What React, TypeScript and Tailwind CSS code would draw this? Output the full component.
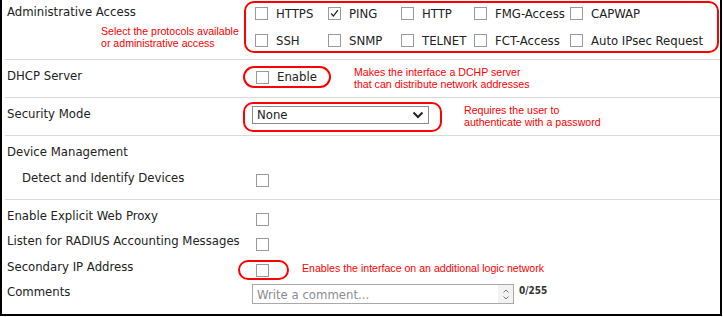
import React from 'react';

const NOTE = "font-['Liberation_Sans',Arial,sans-serif] text-[10.6px] leading-[12px] text-[#ff0000]";

function Box({ checked }: { checked?: boolean }) {
  return (
    <span className="flex h-[13px] w-[13px] shrink-0 items-center justify-center border border-[#9a9a9a] bg-white">
      {checked && (
        <svg viewBox="0 0 13 13" className="h-[13px] w-[13px]">
          <path d="M2.5 6.5 L5.2 9.5 L10.5 2.5" fill="none" stroke="#222" strokeWidth="1.5" />
        </svg>
      )}
    </span>
  );
}

function Opt({ label, checked }: { label: string; checked?: boolean }) {
  return (
    <div className="flex h-[19px] items-center gap-[8px]">
      <Box checked={checked} />
      <span>{label}</span>
    </div>
  );
}

const protocols: [string, boolean][] = [
  ['HTTPS', false],
  ['PING', true],
  ['HTTP', false],
  ['FMG-Access', false],
  ['CAPWAP', false],
  ['SSH', false],
  ['SNMP', false],
  ['TELNET', false],
  ['FCT-Access', false],
  ['Auto IPsec Request', false],
];

export default function App() {
  return (
    <div className="h-[317px] w-[723px] bg-white">
      <div className="h-[316px] w-[722px] border-x-2 border-b-2 border-black font-['DejaVu_Sans_Condensed','DejaVu_Sans',sans-serif] text-[13px] leading-[16px] text-[#222] font-stretch-condensed">
        <div className="ml-[3px]">
          {/* administrative access */}
          <div className="flex h-[60px] border-b border-[#dadada]">
            <div className="w-[238px] shrink-0 pl-[2px] pt-[4px]">
              <div>Administrative Access</div>
              <div className={`ml-[94px] mt-[5px] ${NOTE}`}>
                Select the protocols available
                <br />
                or administrative access
              </div>
            </div>
            <div className="ml-[1px] mt-[1px] grid h-[52px] w-[475px] grid-cols-[73px_73px_73px_96px_auto] gap-y-[7px] rounded-[10px] border-2 border-[#ff0000] pl-[9px] pt-[1px]">
              {protocols.map(([p, c]) => (
                <Opt key={p} label={p} checked={c} />
              ))}
            </div>
          </div>

          {/* dhcp */}
          <div className="flex h-[38px] border-b border-[#dadada]">
            <div className="w-[238px] shrink-0 pl-[2px] pt-[8px]">DHCP Server</div>
            <div className="mt-[6px] flex h-[22px] w-[88px] items-center gap-[8px] rounded-[11px] border-2 border-[#ff0000] pl-[11px]">
              <Box />
              <span>Enable</span>
            </div>
            <div className={`ml-[23px] mt-[6px] ${NOTE}`}>
              Makes the interface a DCHP server
              <br />
              that can distribute network addresses
            </div>
          </div>

          {/* security mode */}
          <div className="flex h-[38px] border-b border-[#dadada]">
            <div className="w-[238px] shrink-0 pl-[2px] pt-[8px]">Security Mode</div>
            <div className="mt-[4px] h-[30px] w-[199px] rounded-[10px] border-2 border-[#ff0000] pl-[7px] pt-[2px]">
              <div className="flex h-[18px] w-[177px] items-center justify-between border border-[#8a8a8a] pl-[4px] pr-[4px]">
                <span>None</span>
                <svg viewBox="0 0 12 8" className="h-[8px] w-[12px]">
                  <path d="M1.5 1.5 L6 6 L10.5 1.5" fill="none" stroke="#222" strokeWidth="2" />
                </svg>
              </div>
            </div>
            <div className={`ml-[22px] mt-[6px] ${NOTE}`}>
              Requires the user to
              <br />
              authenticate with a password
            </div>
          </div>

          {/* device management */}
          <div className="h-[64px] border-b border-[#dadada]">
            <div className="pl-[2px] pt-[8px]">Device Management</div>
            <div className="mt-[10px] flex">
              <div className="w-[238px] shrink-0 pl-[17px]">Detect and Identify Devices</div>
              <div className="ml-[13px] mt-[4px]">
                <Box />
              </div>
            </div>
          </div>

          {/* other options */}
          <div className="flex h-[25px]">
            <div className="w-[238px] shrink-0 pl-[2px] pt-[8px]">Enable Explicit Web Proxy</div>
            <div className="ml-[13px] mt-[13px]">
              <Box />
            </div>
          </div>
          <div className="flex h-[26px]">
            <div className="w-[238px] shrink-0 whitespace-nowrap pl-[2px] pt-[8px]">Listen for RADIUS Accounting Messages</div>
            <div className="ml-[13px] mt-[13px]">
              <Box />
            </div>
          </div>
          <div className="flex h-[25px]">
            <div className="w-[238px] shrink-0 pl-[2px] pt-[8px]">Secondary IP Address</div>
            <div className="ml-[-5px] mt-[9px] flex h-[20px] w-[51px] items-center rounded-full border-2 border-[#ff0000] pl-[16px]">
              <Box />
            </div>
            <div className={`ml-[13px] mt-[11px] ${NOTE}`}>Enables the interface on an additional logic network</div>
          </div>
          <div className="flex h-[30px]">
            <div className="w-[238px] shrink-0 pl-[2px] pt-[8px]">Comments</div>
            <div className="ml-[9px] mt-[8px] flex h-[20px] w-[262px] border border-[#a9a9a9]">
              <div className="flex-1 pl-[4px] pt-[2px] text-[#8d8d8d]">Write a comment...</div>
              <div className="flex w-[15px] flex-col items-center justify-center gap-[3px] bg-[#f2f2f2]">
                <svg viewBox="0 0 6 4" className="h-[4px] w-[6px]">
                  <path d="M0.5 3.5 L3 1 L5.5 3.5" fill="none" stroke="#777" strokeWidth="1" />
                </svg>
                <svg viewBox="0 0 6 4" className="h-[4px] w-[6px]">
                  <path d="M0.5 0.5 L3 3 L5.5 0.5" fill="none" stroke="#777" strokeWidth="1" />
                </svg>
              </div>
            </div>
            <div className="ml-[5px] mt-[9px] text-[10px] font-bold leading-[12px] text-[#333]">0/255</div>
          </div>
        </div>
      </div>
    </div>
  );
}
